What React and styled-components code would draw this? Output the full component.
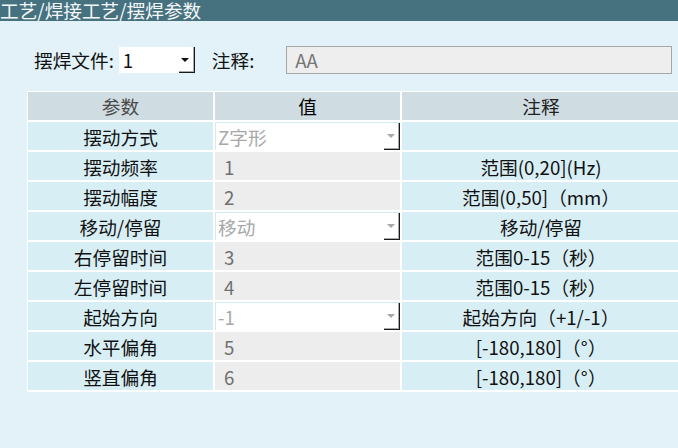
import React from "react";
import styled, { createGlobalStyle } from "styled-components";

const Global = createGlobalStyle`
  html, body {
    margin: 0;
    padding: 0;
    background: #e2f2f8;
    overflow: hidden;
  }
  body {
    font-family: "Microsoft YaHei", "Noto Sans CJK SC", "Noto Sans", sans-serif;
    font-size: 18.67px;
    color: #111;
  }
`;

const Page = styled.div`
  width: 678px;
  height: 448px;
  background: #e2f2f8;
  overflow: hidden;
`;

const TitleBar = styled.div`
  height: 21px;
  background: #46717f;
  color: #f4f8fa;
  font-size: 18.67px;
  line-height: 22px;
  white-space: nowrap;
  display: flex;
  align-items: flex-end;
`;

const FileRow = styled.div`
  display: flex;
  align-items: center;
  height: 28px;
  margin-top: 25px;
  padding-left: 34px;
`;

const Label = styled.span`
  line-height: 28px;
  white-space: nowrap;
  margin-left: ${(p) => p.$before || 0}px;
  margin-right: ${(p) => p.$after || 0}px;
`;

const TopCombo = styled.div`
  position: relative;
  width: 76px;
  height: 26px;
  background: #fff;
  margin-left: 5px;
  display: flex;
  align-items: center;
  padding-left: 4px;
  box-sizing: border-box;
  line-height: 26px;
`;

const DropButton = styled.div`
  position: absolute;
  right: 0;
  top: 0;
  bottom: 0;
  width: 16px;
  box-sizing: border-box;
  border-right: 1px solid #1a1a1a;
  border-bottom: 1px solid #1a1a1a;
  box-shadow: inset -1px -1px 0 #a8a8a8;
  display: flex;
  align-items: center;
  justify-content: center;
  padding-right: 2px;
`;

const Arrow = styled.span`
  width: 0;
  height: 0;
  border-left: 4px solid transparent;
  border-right: 4px solid transparent;
  border-top: 4px solid ${(p) => (p.$disabled ? "#a8a8a8" : "#111")};
`;

const NoteField = styled.div`
  width: 386px;
  height: 28px;
  box-sizing: border-box;
  background: #eeeeee;
  border: 1px solid #a6a6a6;
  color: #777;
  padding-left: 8px;
  line-height: 26px;
`;

const Grid = styled.div`
  display: grid;
  grid-template-columns: 185px 185px 278px;
  grid-auto-rows: 28px;
  gap: 2px;
  padding: 1px 0 2px 1px;
  background: #ffffff;
  margin-top: 17px;
  margin-left: 27px;
  width: max-content;
`;

const HeadCell = styled.div`
  background: #cfdde2;
  display: flex;
  align-items: center;
  justify-content: center;
  color: ${(p) => p.$tone || "#222"};
  line-height: 28px;
`;

const NameCell = styled.div`
  background: #d8eef5;
  display: flex;
  align-items: center;
  justify-content: center;
  color: #111;
  white-space: nowrap;
`;

const NoteCell = styled(NameCell)``;

const InputCell = styled.div`
  background: #ededed;
  color: #707070;
  display: flex;
  align-items: center;
  padding-left: 9px;
`;

const ComboCell = styled.div`
  position: relative;
  background: #fff;
  box-sizing: border-box;
  border-top: 1px solid #d3eaf2;
  border-left: 1px solid #d3eaf2;
  color: #a8a8a8;
  display: flex;
  align-items: center;
  padding-left: 2px;
`;

const rows = [
  { name: "摆动方式", value: "Z字形", combo: true, note: "" },
  { name: "摆动频率", value: "1", note: "范围(0,20](Hz)" },
  { name: "摆动幅度", value: "2", note: "范围(0,50]（mm）" },
  { name: "移动/停留", value: "移动", combo: true, note: "移动/停留" },
  { name: "右停留时间", value: "3", note: "范围0-15（秒）" },
  { name: "左停留时间", value: "4", note: "范围0-15（秒）" },
  { name: "起始方向", value: "-1", combo: true, note: "起始方向（+1/-1）" },
  { name: "水平偏角", value: "5", note: "[-180,180]（°）" },
  { name: "竖直偏角", value: "6", note: "[-180,180]（°）" },
];

export default function App() {
  return (
    <Page>
      <Global />
      <TitleBar>工艺/焊接工艺/摆焊参数</TitleBar>
      <FileRow>
        <Label>摆焊文件:</Label>
        <TopCombo>
          1
          <DropButton>
            <Arrow />
          </DropButton>
        </TopCombo>
        <Label $before={17} $after={32}>注释:</Label>
        <NoteField>AA</NoteField>
      </FileRow>
      <Grid>
        <HeadCell $tone="#4a4a4a">参数</HeadCell>
        <HeadCell $tone="#000">值</HeadCell>
        <HeadCell $tone="#222">注释</HeadCell>
        {rows.map((r) => (
          <React.Fragment key={r.name}>
            <NameCell>{r.name}</NameCell>
            {r.combo ? (
              <ComboCell>
                {r.value}
                <DropButton>
                  <Arrow $disabled />
                </DropButton>
              </ComboCell>
            ) : (
              <InputCell>{r.value}</InputCell>
            )}
            <NoteCell>{r.note}</NoteCell>
          </React.Fragment>
        ))}
      </Grid>
    </Page>
  );
}
